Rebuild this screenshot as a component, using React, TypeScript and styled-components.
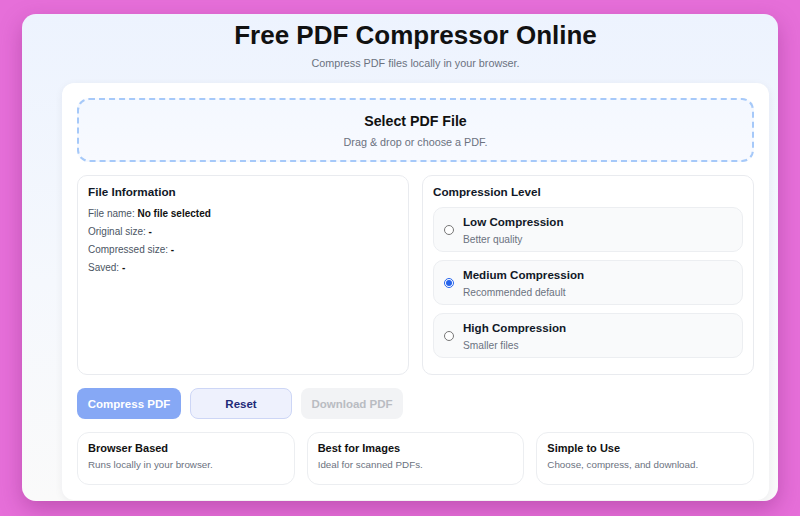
import React, { useState } from 'react';
import styled, { createGlobalStyle } from 'styled-components';

const GlobalStyle = createGlobalStyle`
  html, body {
    margin: 0;
    padding: 0;
    background: #e66fd9;
  }

  body {
    font-family: 'Liberation Sans', Arial, sans-serif;
    color: #111827;
  }

  * {
    box-sizing: border-box;
  }
`;

const Page = styled.div`
  width: 800px;
  height: 516px;
  padding: 14px 22px 15px 22px;
`;

const Shell = styled.div`
  height: 100%;
  padding: 7px 9px 4px 40px;
  background: linear-gradient(180deg, #edf3fe 0%, #f5f8fd 55%, #fafafa 100%);
  border-radius: 14px;
  box-shadow: 0 8px 22px rgba(120, 30, 110, 0.35);
  overflow: hidden;
`;

const Header = styled.header`
  text-align: center;
  margin-bottom: 14px;
`;

const Title = styled.h1`
  margin: 0;
  font-size: 26px;
  line-height: 28px;
  font-weight: 700;
  color: #111111;
`;

const Subtitle = styled.p`
  margin: 8px 0 0;
  font-size: 10.8px;
  color: #6b7280;
`;

const Card = styled.main`
  background: #ffffff;
  border-radius: 12px;
  padding: 15px;
  box-shadow: 0 2px 8px rgba(30, 41, 59, 0.06);
  display: flex;
  flex-direction: column;
  gap: 13px;
`;

const DropZone = styled.label`
  height: 64px;
  border: 2px dashed #a6c9f9;
  border-radius: 12px;
  background: linear-gradient(180deg, #f4f8ff 0%, #f8faff 100%);
  display: flex;
  flex-direction: column;
  align-items: center;
  justify-content: center;
  gap: 7px;
  cursor: pointer;
`;

const DropTitle = styled.span`
  font-size: 14.2px;
  font-weight: 700;
  color: #111111;
`;

const DropHint = styled.span`
  font-size: 10.8px;
  color: #6b7280;
`;

const Panels = styled.div`
  display: grid;
  grid-template-columns: 1fr 1fr;
  gap: 13px;
`;

const Panel = styled.section`
  height: 200px;
  border: 1px solid #e9ebef;
  border-radius: 10px;
  padding: 9px 10px;
`;

const PanelTitle = styled.h2<{ $spaced?: boolean }>`
  margin: 0 0 ${({ $spaced }) => ($spaced ? '8px' : '6px')};
  font-size: 11.7px;
  line-height: 14px;
  font-weight: 700;
  color: #111827;
`;

const InfoRow = styled.div`
  font-size: 10px;
  line-height: 18px;
  color: #4b5563;

  strong {
    color: #111111;
  }
`;

const Options = styled.div`
  display: flex;
  flex-direction: column;
  gap: 8px;
`;

const Option = styled.label`
  height: 45px;
  border: 1px solid #eceef1;
  border-radius: 10px;
  background: #f9fafb;
  display: flex;
  align-items: center;
  gap: 9px;
  padding: 0 10px;
  cursor: pointer;
`;

const Radio = styled.input`
  margin: 0;
  width: 10px;
  height: 10px;
  accent-color: #2563eb;
`;

const OptionText = styled.div`
  display: flex;
  flex-direction: column;
  gap: 6px;
`;

const OptionName = styled.span`
  font-size: 11.6px;
  font-weight: 700;
  color: #111827;
`;

const OptionHint = styled.span`
  font-size: 10.2px;
  color: #6b7280;
`;

const Actions = styled.div`
  display: flex;
  gap: 9px;
`;

const Button = styled.button<{ $variant: 'primary' | 'secondary' | 'muted' }>`
  height: 31px;
  padding: 0;
  border-radius: 8px;
  font-family: inherit;
  font-size: 11.5px;
  font-weight: 700;
  white-space: nowrap;
  cursor: pointer;
  border: 1px solid
    ${({ $variant }) =>
      $variant === 'secondary' ? '#cdd6f6' : 'transparent'};
  background: ${({ $variant }) =>
    $variant === 'primary' ? '#86a8f5' : $variant === 'secondary' ? '#eef1fd' : '#f2f3f5'};
  color: ${({ $variant }) =>
    $variant === 'primary' ? '#ffffff' : $variant === 'secondary' ? '#1e2a78' : '#b9bcc2'};
  width: ${({ $variant }) => ($variant === 'primary' ? '104px' : '102px')};

  &:disabled {
    cursor: default;
  }
`;

const Features = styled.div`
  display: grid;
  grid-template-columns: repeat(3, 1fr);
  gap: 12px;
`;

const Feature = styled.div`
  height: 53px;
  border: 1px solid #eceef1;
  border-radius: 12px;
  padding: 9px 10px;
  display: flex;
  flex-direction: column;
  gap: 5px;
`;

const FeatureTitle = styled.span`
  font-size: 11px;
  font-weight: 700;
  color: #111111;
`;

const FeatureText = styled.span`
  font-size: 9.8px;
  color: #6b7280;
`;

const levels = [
  { id: 'low', name: 'Low Compression', hint: 'Better quality' },
  { id: 'medium', name: 'Medium Compression', hint: 'Recommended default' },
  { id: 'high', name: 'High Compression', hint: 'Smaller files' },
];

const features = [
  { title: 'Browser Based', text: 'Runs locally in your browser.' },
  { title: 'Best for Images', text: 'Ideal for scanned PDFs.' },
  { title: 'Simple to Use', text: 'Choose, compress, and download.' },
];

const App = () => {
  const [level, setLevel] = useState('medium');

  return (
    <>
      <GlobalStyle />
      <Page>
        <Shell>
          <Header>
            <Title>Free PDF Compressor Online</Title>
            <Subtitle>Compress PDF files locally in your browser.</Subtitle>
          </Header>
          <Card>
            <DropZone>
              <DropTitle>Select PDF File</DropTitle>
              <DropHint>Drag &amp; drop or choose a PDF.</DropHint>
            </DropZone>

            <Panels>
              <Panel>
                <PanelTitle>File Information</PanelTitle>
                <InfoRow>
                  File name: <strong>No file selected</strong>
                </InfoRow>
                <InfoRow>
                  Original size: <strong>-</strong>
                </InfoRow>
                <InfoRow>
                  Compressed size: <strong>-</strong>
                </InfoRow>
                <InfoRow>
                  Saved: <strong>-</strong>
                </InfoRow>
              </Panel>

              <Panel>
                <PanelTitle $spaced>Compression Level</PanelTitle>
                <Options>
                  {levels.map((l) => (
                    <Option key={l.id}>
                      <Radio
                        type="radio"
                        name="level"
                        checked={level === l.id}
                        onChange={() => setLevel(l.id)}
                      />
                      <OptionText>
                        <OptionName>{l.name}</OptionName>
                        <OptionHint>{l.hint}</OptionHint>
                      </OptionText>
                    </Option>
                  ))}
                </Options>
              </Panel>
            </Panels>

            <Actions>
              <Button $variant="primary">Compress PDF</Button>
              <Button $variant="secondary">Reset</Button>
              <Button $variant="muted" disabled>
                Download PDF
              </Button>
            </Actions>

            <Features>
              {features.map((f) => (
                <Feature key={f.title}>
                  <FeatureTitle>{f.title}</FeatureTitle>
                  <FeatureText>{f.text}</FeatureText>
                </Feature>
              ))}
            </Features>
          </Card>
        </Shell>
      </Page>
    </>
  );
};

export default App;
